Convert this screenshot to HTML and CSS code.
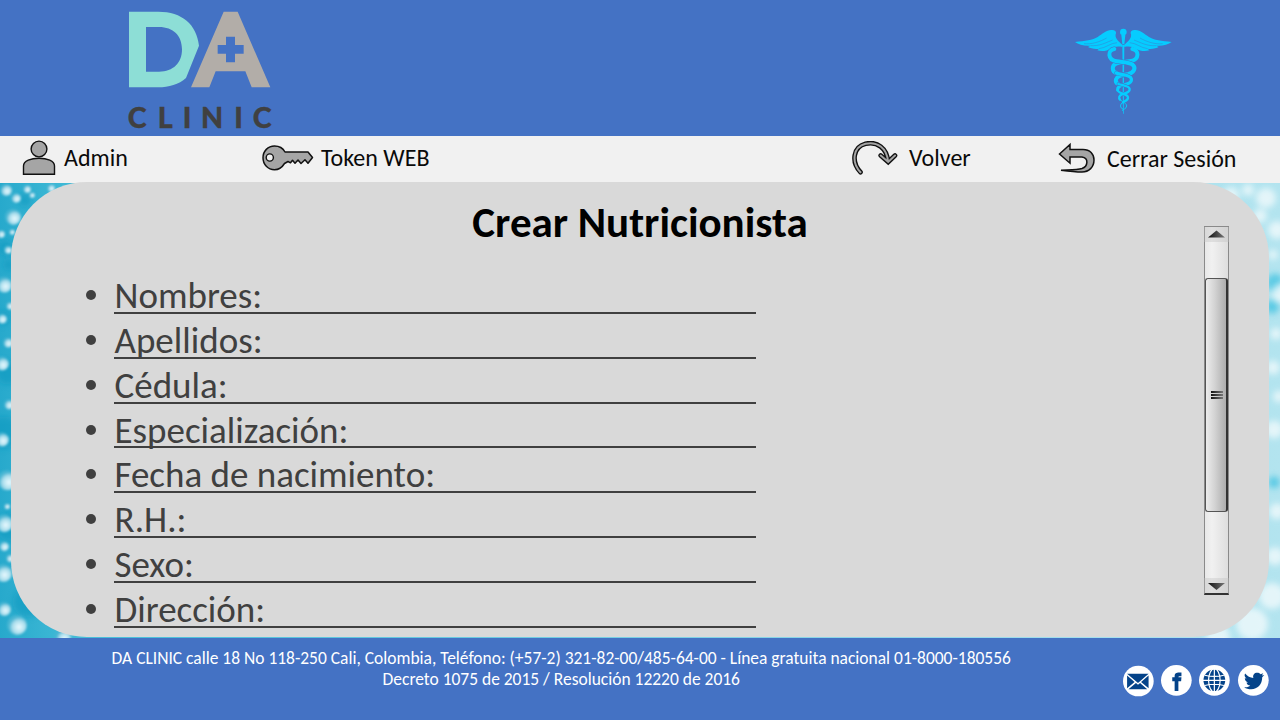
FILE: index.html
```html
<!DOCTYPE html>
<html lang="es">
<head>
<meta charset="utf-8">
<title>DA Clinic - Crear Nutricionista</title>
<link rel="stylesheet" href="styles.css">
</head>
<body>
<header class="banner">
  <svg class="logo" viewBox="0 0 540 408" role="img" aria-label="DA Clinic">
    <path fill="#8dded6" fill-rule="evenodd" d="M57 35H145C216 35 260 73 267 137L228 234C207 253 176 262 145 262H57ZM108 81V215H147C190 215 216 189 216 148C216 107 190 81 147 81Z"/>
    <path fill="#b2ada8" fill-rule="evenodd" d="M341 35H383L481 262H425L406 214H317L298 262H243ZM348 110V135H323V161H348V187H375V161H401V135H375V110Z"/>
    <text class="logo-text" y="383" x="53 143 218 273 373 428">CLINIC</text>
  </svg>
  <svg class="caduceus" viewBox="0 0 375 330">
    <g fill="#06ccff">
      <circle cx="190" cy="51" r="10"/>
      <path d="M184 60h12l-3 28h-6z"/>
      <path d="M45 81C75 78 98 75 113 66C127 57 138 46 154 45C164 44 169 49 168 55C162 68 176 80 188 90L187 96C173 93 163 95 151 102C141 108 125 110 112 106L117 101C105 103 91 100 84 96L91 92C72 93 55 89 45 81Z"/>
      <path d="M335 81C305 78 282 75 267 66C253 57 242 46 226 45C216 44 211 49 212 55C218 68 204 80 192 90L193 96C207 93 217 95 229 102C239 108 255 110 268 106L263 101C275 103 289 100 296 96L289 92C308 93 325 89 335 81Z"/>
      <path d="M187 90h6l-2 206h-2z"/>
    </g>
    <g fill="none" stroke="#4472c4" stroke-width="1.3">
      <path d="M72 86C94 89 121 80 140 69M91 92C119 94 137 83 158 75M117 101C138 99 151 84 171 83M308 86C286 89 259 80 240 69M289 92C261 94 243 83 222 75M263 101C242 99 229 84 209 83"/>
    </g>
    <g fill="none" stroke-linecap="round">
      <path stroke="#06ccff" stroke-width="12" d="M217 102C238 105 238 133 214 138C198 141 182 140 168 146C154 152 156 170 169 174"/>
      <path stroke="#4472c4" stroke-width="15" d="M163 102C142 105 142 135 170 139C188 142 206 140 218 149C230 159 220 174 205 177C188 180 172 181 168 193C166 200 170 205 175 207"/>
      <path stroke="#06ccff" stroke-width="12" d="M163 102C142 105 142 135 170 139C188 142 206 140 218 149C230 159 220 174 205 177C188 180 172 181 168 193C166 200 170 205 175 207"/>
      <path stroke="#4472c4" stroke-width="12" d="M169 174C183 181 209 177 214 191C217 204 201 208 191 210C180 212 172 217 173 225"/>
      <path stroke="#06ccff" stroke-width="9.500" d="M169 174C183 181 209 177 214 191C217 204 201 208 191 210C180 212 172 217 173 225"/>
      <path stroke="#4472c4" stroke-width="10" d="M175 207C188 212 207 212 209 222C210 233 195 235 186 238C176 242 176 250 180 254"/>
      <path stroke="#06ccff" stroke-width="7" d="M175 207C188 212 207 212 209 222C210 233 195 235 186 238C176 242 176 250 180 254M173 225C174 237 202 235 204 247C205 256 193 259 189 262"/>
      <path stroke="#06ccff" stroke-width="3" d="M180 254C190 262 200 265 200 273C199 282 190 282 187 286M189 262C178 268 180 279 188 282"/>
    </g>
  </svg>
</header>

<nav class="menu">
  <a class="item admin">
    <svg class="icon" width="34" height="36" viewBox="0 0 34 36"><g fill="#a5a5a5" stroke="#111" stroke-width="1.4"><circle cx="17" cy="9" r="7.9"/><path d="M1.500 34.300V26C1.500 21 9 18.200 17 18.200S32.500 21 32.500 26V34.300Z"/></g></svg>
    <span>Admin</span>
  </a>
  <a class="item token">
    <svg class="icon" width="52" height="28" viewBox="0 0 52 28"><path fill="#a5a5a5" stroke="#111" stroke-width="1.5" stroke-linejoin="round" d="M23 8H46L50.500 13.500L46 19.300L43 15.700L39 19.500L36 16L33 19.300L30.500 16.300L28.500 18.800L26 17.500L22.500 19.500C20 23.500 16.500 25.700 12.500 25.700C6 25.700 1 20.500 1 13.800S6 2 12.500 2C17 2 21 4.200 23 8Z"/><circle cx="7.800" cy="13.500" r="3.600" fill="#f1f1f1" stroke="#111" stroke-width="1.4"/></svg>
    <span>Token WEB</span>
  </a>
  <a class="item back">
    <svg class="icon" width="46" height="35" viewBox="0 0 46 35"><g fill="none" stroke-linecap="round"><path stroke="#111" stroke-width="4.700" d="M8.500 31.200C-1 21 1 6 13.500 2.800C25 0 35 7 36 20.500M28.700 14.500L36.200 21L43 14.500"/><path stroke="#a5a5a5" stroke-width="2" d="M8.500 31.200C-1 21 1 6 13.500 2.800C25 0 35 7 36 20.500M28.700 14.500L36.200 21L43 14.500"/></g></svg>
    <span>Volver</span>
  </a>
  <a class="item logout">
    <svg class="icon" width="38" height="32" viewBox="0 0 38 32"><path fill="#a5a5a5" stroke="#111" stroke-width="1.5" d="M1.500 12L12 2.500V7.500H25C32 7.500 36 12 36 18C36 25 31 30 24 30C17 30 9 29 3 28.200C11 27.800 19 28 24 26.500C30 24.500 31 16 24 15H12V21.200Z"/></svg>
    <span>Cerrar Sesión</span>
  </a>
</nav>

<main class="stage">
  <svg class="bubbles" viewBox="0 0 1280 456" preserveAspectRatio="none">
    <defs>
      <linearGradient id="water"><stop offset="0" stop-color="#27a9cc"/><stop offset=".07" stop-color="#48bfd9"/><stop offset=".88" stop-color="#a7e0ed"/><stop offset="1" stop-color="#b3e4ef"/></linearGradient>
      <radialGradient id="drop" cx=".6" cy=".6"><stop offset="0" stop-color="#eafaff"/><stop offset=".65" stop-color="#a9ddec"/><stop offset="1" stop-color="#47b5d3"/></radialGradient>
      <filter id="soft"><feGaussianBlur stdDeviation="1"/></filter>
      <filter id="haze"><feGaussianBlur stdDeviation="3"/></filter>
    </defs>
    <rect width="1280" height="456" fill="url(#water)"/>
    <g fill="#1199c0" opacity=".6" filter="url(#haze)"><circle cx="25" cy="17" r="7"/><circle cx="5" cy="65" r="8"/><circle cx="9" cy="82" r="6"/><circle cx="3" cy="135" r="7"/><circle cx="8" cy="190" r="12"/><circle cx="4" cy="250" r="16"/><circle cx="10" cy="345" r="14"/><circle cx="28" cy="420" r="15"/></g>
    <g fill="#35bfe0" opacity=".7" filter="url(#haze)"><circle cx="1275" cy="100" r="9"/><circle cx="1272" cy="124" r="7"/><circle cx="1274" cy="300" r="6"/></g>
    <g fill="url(#drop)" filter="url(#soft)">
      <circle cx="6" cy="7" r="6"/><circle cx="27" cy="6" r="4"/><circle cx="16" cy="15" r="5"/><circle cx="32" cy="12" r="3"/><circle cx="51" cy="5" r="4"/><circle cx="13" cy="34" r="8"/><circle cx="1" cy="51" r="4"/><circle cx="12" cy="49" r="3"/><circle cx="8" cy="67" r="4"/><circle cx="4" cy="102" r="8"/><circle cx="10" cy="123" r="4"/><circle cx="2" cy="136" r="5"/><circle cx="8" cy="160" r="5"/><circle cx="2" cy="181" r="7"/><circle cx="9" cy="222" r="5"/><circle cx="2" cy="257" r="7"/><circle cx="7" cy="298" r="10"/><circle cx="7" cy="324" r="3"/><circle cx="4" cy="341" r="9"/><circle cx="4" cy="364" r="5"/><circle cx="10" cy="376" r="4"/><circle cx="3" cy="391" r="9"/><circle cx="4" cy="427" r="7"/><circle cx="17" cy="443" r="10"/><circle cx="63" cy="455" r="8"/>
    </g>
    <g fill="#fff" opacity=".65" filter="url(#haze)"><circle cx="1231" cy="12" r="8"/><circle cx="1248" cy="7" r="6"/><circle cx="1266" cy="15" r="10"/><circle cx="1260" cy="33" r="7"/><circle cx="1277" cy="47" r="9"/><circle cx="1273" cy="72" r="5"/><circle cx="1282" cy="110" r="10"/><circle cx="1276" cy="151" r="6"/><circle cx="1273" cy="185" r="7"/><circle cx="1279" cy="214" r="6"/><circle cx="1274" cy="247" r="9"/><circle cx="1277" cy="329" r="8"/><circle cx="1275" cy="374" r="9"/><circle cx="1272" cy="414" r="13"/><circle cx="1252" cy="442" r="16"/><circle cx="1218" cy="454" r="12"/></g>
  </svg>
  <section class="card">
    <h1 class="title">Crear Nutricionista</h1>
    <ul class="fields">
      <li><span>Nombres:</span></li>
      <li><span>Apellidos:</span></li>
      <li><span>Cédula:</span></li>
      <li><span>Especialización:</span></li>
      <li><span>Fecha de nacimiento:</span></li>
      <li><span>R.H.:</span></li>
      <li><span>Sexo:</span></li>
      <li><span>Dirección:</span></li>
    </ul>
    <div class="scrollbar">
      <svg class="arrow" viewBox="0 0 25 15"><defs><linearGradient id="ink"><stop stop-color="#111"/><stop offset="1" stop-color="#777"/></linearGradient></defs><path fill="url(#ink)" d="M4 10.500L12.500 3.500L21 10.500Z"/></svg>
      <div class="thumb"><i></i><i></i><i></i></div>
      <svg class="arrow" viewBox="0 0 25 15"><path fill="url(#ink)" d="M4 5L12.500 12L21 5Z"/></svg>
    </div>
  </section>
</main>

<footer class="footer">
  <div class="address">
    <div>DA CLINIC calle 18 No 118-250 Cali, Colombia, Teléfono: (+57-2) 321-82-00/485-64-00 - Línea gratuita nacional 01-8000-180556</div>
    <div>Decreto 1075 de 2015 / Resolución 12220 de 2016</div>
  </div>
  <div class="social">
    <svg viewBox="0 0 90 90"><circle cx="45" cy="47" r="45" fill="#fff"/><path fill="#044389" d="M12 26H75L44 53ZM12 31L34 50L12 68ZM75 31L53 50L75 68ZM38 53L44 58L50 53L71 71H16Z"/></svg>
    <svg viewBox="0 0 90 90"><circle cx="45" cy="45" r="45" fill="#fff"/><path fill="#044389" d="M40 76V48H33V36H40V33C40 24 45 22 53 22H60V33H54C52 33 51 34 51 36H60L59 48H51V76Z"/></svg>
    <svg viewBox="0 0 90 90"><circle cx="45" cy="45" r="45" fill="#fff"/><circle cx="45" cy="45" r="32" fill="#044389"/><g fill="none" stroke="#fff" stroke-width="3.500"><path d="M45 10V80M10 45H80M17 30Q45 37 73 30M17 60Q45 53 73 60"/><ellipse cx="45" cy="45" rx="17" ry="34"/></g></svg>
    <svg viewBox="0 0 90 90"><circle cx="45" cy="45" r="45" fill="#fff"/><path fill="#044389" d="M21 25C27 33 36 38 45 38C42 28 50 22 57 23C61 23 64 25 66 27L74 24L70 31L77 29L71 36C71 57 57 71 39 71C31 71 24 69 18 65C26 66 32 64 36 60C30 60 26 56 25 51H30C23 49 20 44 20 38L25 40C19 35 18 30 21 25Z"/></svg>
  </div>
</footer>
</body>
</html>
```
FILE: styles.css
```css
* { box-sizing: border-box; }
body {
  margin: 0;
  width: 1280px;
  height: 720px;
  overflow: hidden;
  display: flex;
  flex-direction: column;
  background: #4472c4;
  font-family: Carlito, Lato, sans-serif;
}
.banner {
  flex: 0 0 136px;
  display: flex;
  justify-content: space-between;
  padding: 0 95px 0 110px;
  background: #4472c4;
}
.logo { width: 180px; height: 136px; }
.logo-text { font: 900 86px Lato, sans-serif; fill: #404040; stroke: #404040; stroke-width: 1px; }
.caduceus { width: 125px; height: 110px; margin-top: 15px; }

.menu {
  flex: 0 0 46px;
  display: grid;
  grid-template-columns: 239px 591px 206px 1fr;
  padding-left: 22px;
  background: #f1f1f1;
  color: #0a0a0a;
  font-size: 24px;
}
.item { display: flex; align-items: flex-start; line-height: 44px; white-space: nowrap; }
.icon { flex: none; }
.admin { gap: 8px; }
.admin .icon { margin-top: 3.5px; }
.token { gap: 7px; }
.token .icon { margin: 8px 0 0 1px; }
.back { gap: 11px; }
.back .icon { margin-top: 4.5px; }
.logout { gap: 11px; line-height: 46px; }
.logout .icon { margin-top: 6px; }

.stage { flex: 0 0 456px; position: relative; padding: 0 11px 1px; background: #f1f1f1; }
.bubbles { position: absolute; left: 0; top: 1px; width: 1280px; height: 455px; }
.card {
  position: relative;
  height: 455px;
  border-radius: 76px;
  background: #d9d9d9;
  display: grid;
  grid-template-columns: 1fr 25px;
  grid-template-rows: 87.2px 1fr;
  padding-right: 40px;
}
.title {
  margin: 0 0 0 65px;
  padding-top: 18px;
  text-align: center;
  font-size: 43px;
  line-height: 46px;
  font-weight: 700;
  color: #000;
}
.fields { grid-row: 2; margin: 0; padding: 0 0 0 75px; list-style: none; color: #404040; font-size: 37px; }
.fields li { display: flex; align-items: flex-start; gap: 18px; width: 670px; height: 44.8px; }
.fields li::before { content: ""; flex: none; width: 10px; height: 10px; margin-top: 21px; border-radius: 50%; background: #404040; }
.fields span { flex: 1; height: 44.8px; padding: 10px 0 0 .5px; line-height: 33.6px; border-bottom: 2px solid #404040; white-space: nowrap; }

.scrollbar {
  grid-column: 2;
  grid-row: 1 / 3;
  height: 369px;
  margin-top: 44px;
  display: flex;
  flex-direction: column;
  justify-content: space-between;
  border: solid #8a8a8a;
  border-width: 1px 1px 2px 1px;
  border-bottom-color: #333;
  background: linear-gradient(90deg, #e8e8e8, #f1f1f1 30%, #dedede);
}
.arrow { width: 25px; height: 15px; margin-left: -1px; background: rgba(190, 190, 190, .35); }
.thumb {
  height: 234px;
  margin-top: 22px;
  margin-bottom: 53px;
  padding-left: 1px;
  border: 1px solid #555;
  border-right: 2px solid #333;
  border-radius: 3px;
  background: linear-gradient(90deg, #ececec, #d2d2d2 45%, #adadad);
  display: flex;
  flex-direction: column;
  justify-content: center;
  align-items: center;
  gap: 1px;
}
.thumb i { width: 12px; height: 2px; background: linear-gradient(90deg, #111, #777); }

.footer { flex: 0 0 82px; display: flex; background: #4472c4; color: #fff; }
.address { width: 1122.5px; padding-top: 10px; text-align: center; font-size: 17.47px; line-height: 21px; white-space: nowrap; }
.social { display: flex; gap: 7.8px; padding-top: 27px; }
.social svg { width: 30.7px; height: 30.7px; overflow: visible; }
```
